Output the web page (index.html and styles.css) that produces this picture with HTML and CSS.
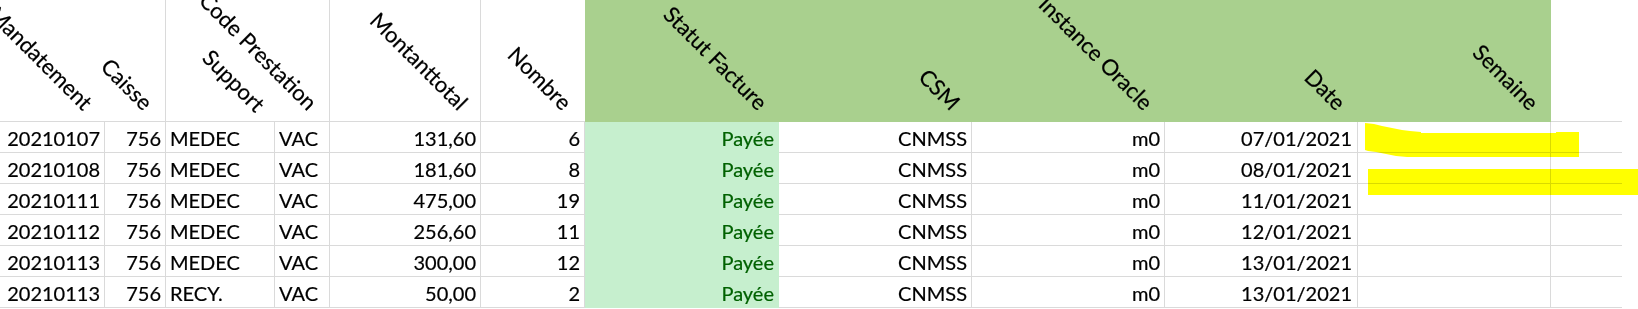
FILE: index.html
```html
<!DOCTYPE html>
<html lang="fr">
<head>
<meta charset="utf-8">
<title>Feuille</title>
<link rel="stylesheet" href="styles.css">
</head>
<body>
<div class="sheet">
  <div class="row hdr">
    <div class="hc ca"><span>Mandatement</span></div>
    <div class="hc cb vline"><span>Caisse</span></div>
    <div class="hc cc sup"><span>Support</span></div>
    <div class="hc cd vline"><span>Code Prestation</span></div>
    <div class="hc ce vline"><span>Montanttotal</span></div>
    <div class="hc cf"><span>Nombre</span></div>
    <div class="hc cg green"><span>Statut Facture</span></div>
    <div class="hc ch green"><span>CSM</span></div>
    <div class="hc ci green"><span>Instance Oracle</span></div>
    <div class="hc cj green"><span>Date</span></div>
    <div class="hc ck green"><span>Semaine</span></div>
    <div class="hc cl"></div>
  </div>

  <div class="row">
    <div class="c ca r">20210107</div><div class="c cb r">756</div><div class="c cc">MEDEC</div><div class="c cd">VAC</div><div class="c ce r">131,60</div><div class="c cf r">6</div><div class="c cg good r">Payée</div><div class="c ch r">CNMSS</div><div class="c ci r">m0</div><div class="c cj r">07/01/2021</div><div class="c ck"></div><div class="c cl"></div>
  </div>
  <div class="row">
    <div class="c ca r">20210108</div><div class="c cb r">756</div><div class="c cc">MEDEC</div><div class="c cd">VAC</div><div class="c ce r">181,60</div><div class="c cf r">8</div><div class="c cg good r">Payée</div><div class="c ch r">CNMSS</div><div class="c ci r">m0</div><div class="c cj r">08/01/2021</div><div class="c ck"></div><div class="c cl"></div>
  </div>
  <div class="row">
    <div class="c ca r">20210111</div><div class="c cb r">756</div><div class="c cc">MEDEC</div><div class="c cd">VAC</div><div class="c ce r">475,00</div><div class="c cf r">19</div><div class="c cg good r">Payée</div><div class="c ch r">CNMSS</div><div class="c ci r">m0</div><div class="c cj r">11/01/2021</div><div class="c ck"></div><div class="c cl"></div>
  </div>
  <div class="row">
    <div class="c ca r">20210112</div><div class="c cb r">756</div><div class="c cc">MEDEC</div><div class="c cd">VAC</div><div class="c ce r">256,60</div><div class="c cf r">11</div><div class="c cg good r">Payée</div><div class="c ch r">CNMSS</div><div class="c ci r">m0</div><div class="c cj r">12/01/2021</div><div class="c ck"></div><div class="c cl"></div>
  </div>
  <div class="row">
    <div class="c ca r">20210113</div><div class="c cb r">756</div><div class="c cc">MEDEC</div><div class="c cd">VAC</div><div class="c ce r">300,00</div><div class="c cf r">12</div><div class="c cg good r">Payée</div><div class="c ch r">CNMSS</div><div class="c ci r">m0</div><div class="c cj r">13/01/2021</div><div class="c ck"></div><div class="c cl"></div>
  </div>
  <div class="row">
    <div class="c ca r">20210113</div><div class="c cb r">756</div><div class="c cc">RECY.</div><div class="c cd">VAC</div><div class="c ce r">50,00</div><div class="c cf r">2</div><div class="c cg good r">Payée</div><div class="c ch r">CNMSS</div><div class="c ci r">m0</div><div class="c cj r">13/01/2021</div><div class="c ck"></div><div class="c cl"></div>
  </div>

  <svg class="marker" width="1638" height="309" viewBox="0 0 1638 309" aria-hidden="true">
    <polygon points="1365,123 1374,124 1382,126 1392,128 1402,130 1410,131 1421,132 1421,133 1556,133 1556,132 1579,132 1579,157 1407,157 1396,156 1386,154 1376,152 1368,151 1365,150"/>
    <rect x="1368" y="169" width="270" height="26"/>
  </svg>
</div>
</body>
</html>
```

FILE: styles.css
```css
html, body {
  margin: 0;
  padding: 0;
  background: #ffffff;
}

body {
  width: 1638px;
  height: 309px;
  overflow: hidden;
  font-family: "Lato", "Open Sans", sans-serif;
  font-size: 20px;
  color: #000000;
  -webkit-text-stroke: 0.2px currentColor;
}

.sheet {
  position: relative;
  width: 1638px;
  height: 309px;
}

.row {
  display: flex;
}

/* column widths (border-box, including the 1px gridline) */
.ca { width: 105px; }
.cb { width: 61px; }
.cc { width: 109px; }
.cd { width: 55px; }
.ce { width: 151px; }
.cf { width: 104px; }
.cg { width: 194px; }
.ch { width: 193px; }
.ci { width: 193px; }
.cj { width: 193px; }
.ck { width: 193px; }
.cl { width: 71px; }

/* header row */
.hdr {
  height: 122px;
}

.hc {
  box-sizing: border-box;
  flex: none;
  height: 122px;
  border-bottom: 1px solid #dadada;
  display: flex;
  justify-content: flex-end;
  align-items: flex-end;
  padding: 0 16px 3px 0;
  font-size: 22px;
}

.hc span {
  flex: none;
  display: block;
  white-space: nowrap;
  line-height: 24px;
  transform-origin: 100% 50%;
  transform: rotate(45deg);
}

.hc.vline {
  border-right: 1px solid #dadada;
}

.hc.sup {
  padding-right: 14px;
  padding-bottom: 1px;
}

.hc.green {
  background: #a9d08e;
  border-bottom-color: #a9d08e;
}

.hc.cf {
  padding-right: 17px;
}

/* data cells */
.c {
  box-sizing: border-box;
  flex: none;
  height: 31px;
  padding: 2px 4px 0 4px;
  line-height: 28px;
  white-space: nowrap;
  overflow: visible;
  border-right: 1px solid #dadada;
  border-bottom: 1px solid #dadada;
}

.c.r {
  text-align: right;
}

.c.good {
  background: #c6efce;
  color: #006100;
  border-right-color: #c6efce;
  border-bottom-color: #c6efce;
}

.c.cl {
  border-right: none;
}

.c.cj {
  padding-right: 5px;
}

/* highlighter strokes drawn over the sheet */
.marker {
  position: absolute;
  left: 0;
  top: 0;
  pointer-events: none;
  mix-blend-mode: multiply;
}

.marker polygon,
.marker rect {
  fill: #ffff00;
}
```
